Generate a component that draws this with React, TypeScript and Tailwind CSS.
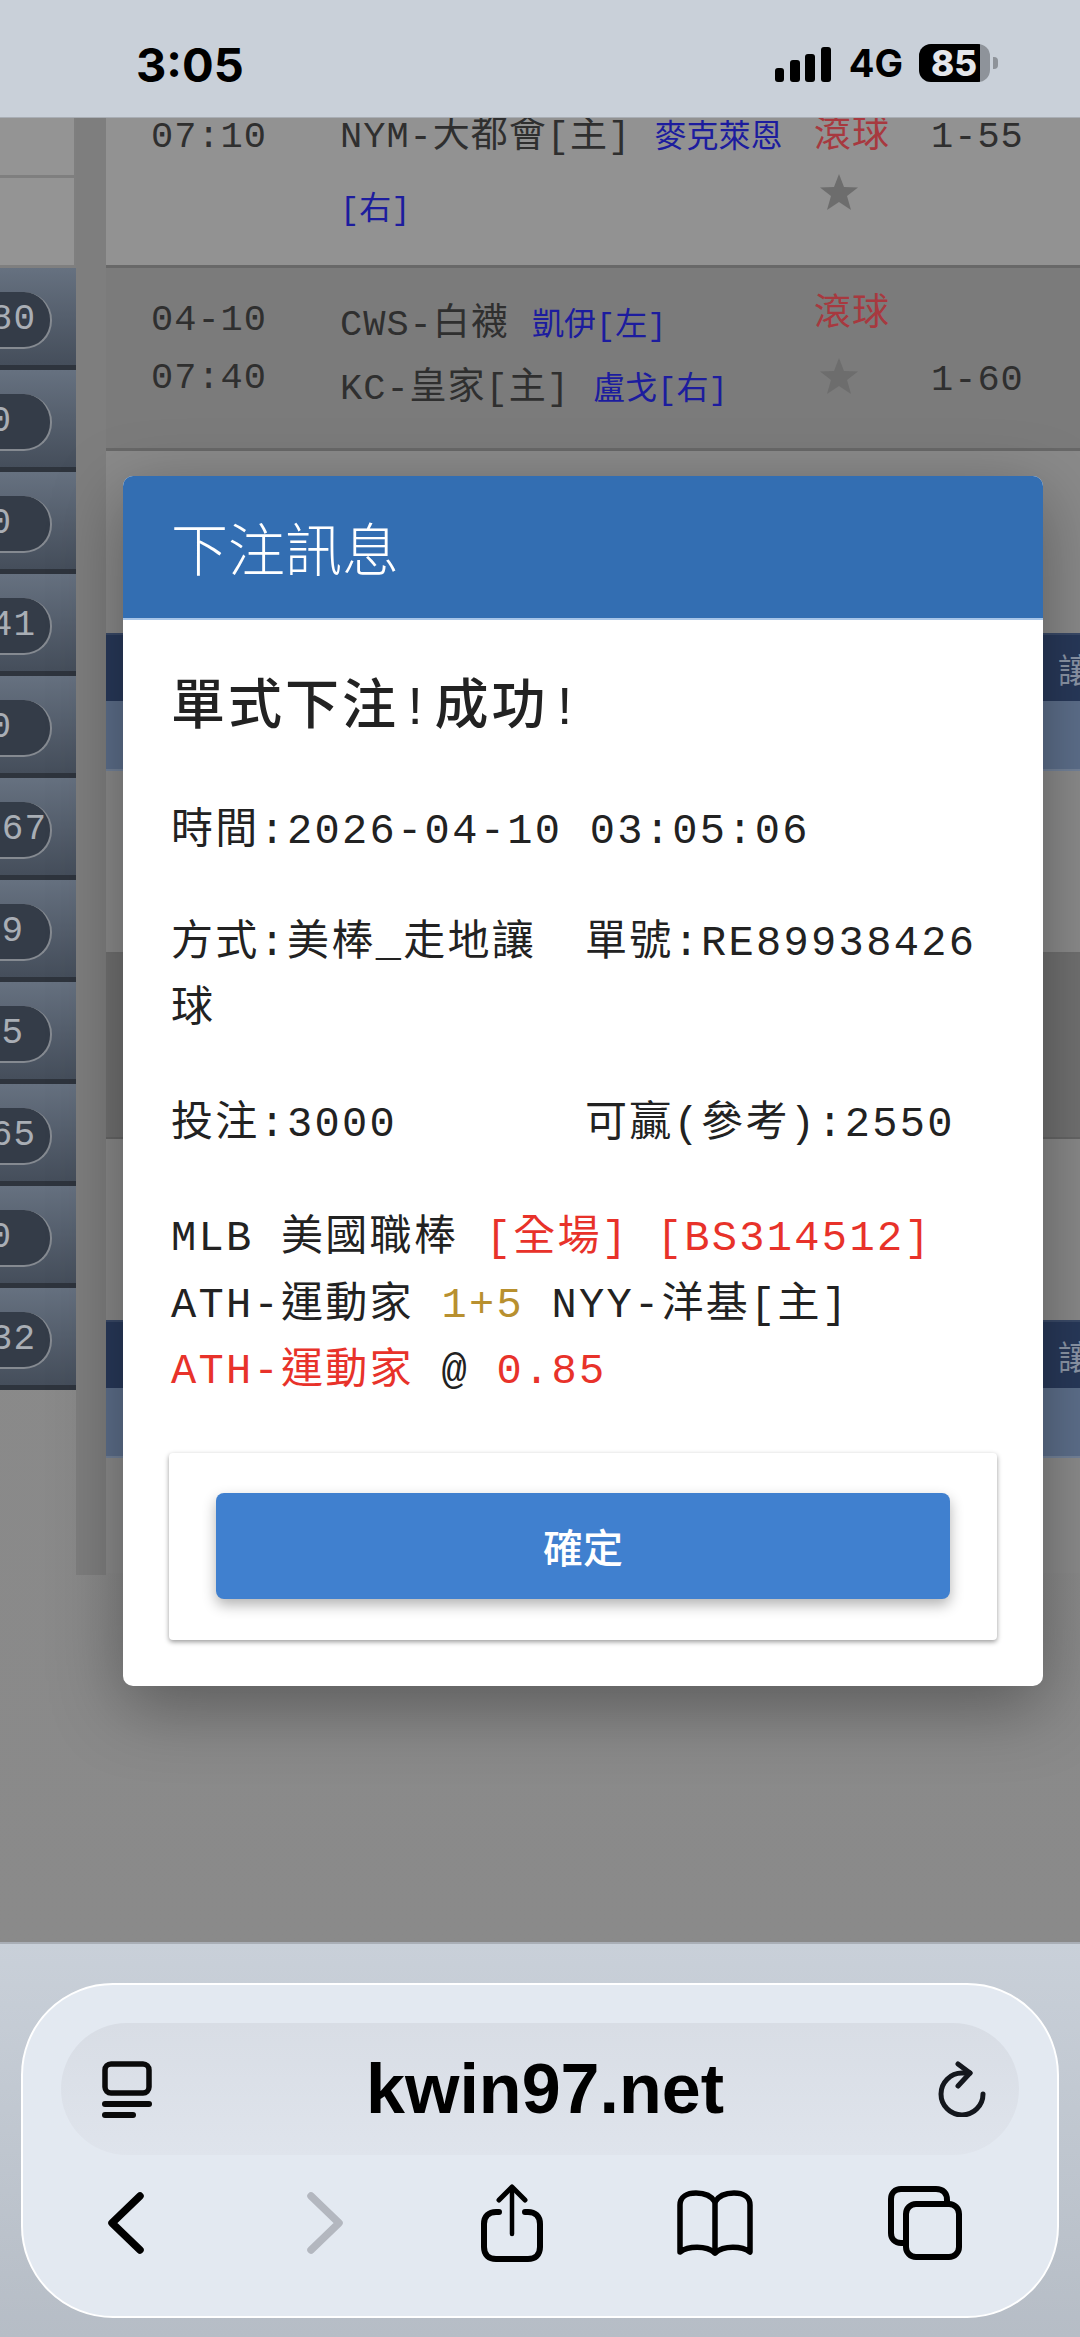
const MONO = "font-['Liberation_Mono','Noto_Sans_CJK_TC',monospace]";

const SIDE_ROWS = [
  { label: "80", pad: "pr-[14px]" },
  { label: "0", pad: "pr-[38px]" },
  { label: "0", pad: "pr-[38px]" },
  { label: "41", pad: "pr-[14px]" },
  { label: "0", pad: "pr-[38px]" },
  { label: "67", pad: "pr-[3px]" },
  { label: "59", pad: "pr-[26px]" },
  { label: "5", pad: "pr-[26px]" },
  { label: "65", pad: "pr-[14px]" },
  { label: "0", pad: "pr-[38px]" },
  { label: "32", pad: "pr-[14px]" },
];

function Star() {
  return (
    <svg width="38" height="36" viewBox="0 0 38 36" className="block">
      <polygon points="19,0 24,13 38,13.5 27,22 31,36 19,28 7,36 11,22 0,13.5 14,13" fill="#6d6d6d" />
    </svg>
  );
}

function SidePanel() {
  return (
    <div className="w-[76px] shrink-0 flex flex-col">
      <div className="h-[60px] bg-[#949494] border-b-[3px] border-r-[2px] border-[#7f7f7f]" />
      <div className="h-[90px] bg-[#949494] border-b-[3px] border-r-[2px] border-[#7f7f7f]" />
      {SIDE_ROWS.map((row, i) => (
        <div key={i} className="h-[102px] pt-[24px] bg-gradient-to-b from-[#667180] to-[#454e5b] border-b-[5px] border-[#2e343d] overflow-hidden">
          <div className={`w-[52px] h-[57px] flex items-center justify-end rounded-r-[28px] bg-[#343c48] border-b-[2px] border-r-[2px] border-[#858a91] overflow-hidden ${row.pad}`}>
            <span className={`${MONO} text-[36px] tracking-[1px] text-[#a9aeb5] leading-none`}>{row.label}</span>
          </div>
        </div>
      ))}
    </div>
  );
}

function GameRow({ bg, time, teams, last, height }: { bg: string; time: string[]; teams: React.ReactNode; last: string; height: string }) {
  return (
    <div className={`${bg} ${height} flex border-b-[3px] border-[#686868] overflow-hidden text-[37px] tracking-[1px] leading-[62px] text-[#2f2f2f] ${MONO}`}>
      <div className="w-[234px] shrink-0 pl-[45px] pt-[23px]">
        {time.map((t) => (
          <div key={t} className="h-[58px] leading-[58px]">{t}</div>
        ))}
      </div>
      {teams}
      <div className="w-[117px] shrink-0 pt-[16px]">
        <div className="text-[#a7393f] h-[62px] leading-[62px]">滾球</div>
        <div className="pl-[6px] pt-[12px]"><Star /></div>
      </div>
      <div className="pt-[81px]">{last}</div>
    </div>
  );
}

function Band({ tail }: { tail?: boolean }) {
  return (
    <div className="flex flex-col">
      <div className="h-[68px] bg-[#28395a] border-t-[2px] border-[#3a4a68] flex items-center justify-end overflow-hidden">
        <span className="text-[34px] text-[#8d97a8] font-['Noto_Sans_CJK_TC',sans-serif] mr-[-12px]">{tail ? "讓" : "讓"}</span>
      </div>
      <div className="h-[70px] bg-[#5d6f8b] border-b-[2px] border-[#74839a]" />
    </div>
  );
}

function GamesPanel() {
  return (
    <div className="flex-1 flex flex-col min-w-0">
      {/* first row is cut by the status bar */}
      <div className="h-[150px] bg-[#929292] flex border-b-[3px] border-[#686868] overflow-hidden text-[37px] tracking-[1px] text-[#2f2f2f] font-['Liberation_Mono','Noto_Sans_CJK_TC',monospace]">
        <div className="w-[234px] shrink-0 pl-[45px] leading-[38px]">07:10</div>
        <div className="w-[474px] shrink-0 mt-[-16px] leading-[70px]">
          NYM-大都會[主] <span className="text-[32px] tracking-[0px] text-[#1c1c9e]">麥克萊恩[右]</span>
        </div>
        <div className="w-[117px] shrink-0 mt-[-16px]">
          <div className="text-[#a7393f] leading-[70px]">滾球</div>
          <div className="pl-[6px] pt-[2px]"><Star /></div>
        </div>
        <div className="leading-[38px]">1-55</div>
      </div>
      <GameRow
        bg="bg-[#7b7b7b]"
        height="h-[183px]"
        time={["04-10", "07:40"]}
        last="1-60"
        teams={
          <div className="w-[474px] shrink-0 pt-[26px]">
            <div>CWS-白襪 <span className="text-[32px] tracking-[0px] text-[#1c1c9e]">凱伊[左]</span></div>
            <div>KC-皇家[主] <span className="text-[32px] tracking-[0px] text-[#1c1c9e]">盧戈[右]</span></div>
          </div>
        }
      />
      <div className="h-[182px] bg-[#8a8a8a]" />
      <Band />
      <div className="h-[183px] bg-[#8b8b8b] border-b-[2px] border-[#707070]" />
      <div className="h-[185px] bg-[#717171] border-b-[2px] border-[#666666]" />
      <div className="h-[181px] bg-[#898989]" />
      <Band tail />
      <div className="h-[115px] bg-[#8b8b8b]" />
    </div>
  );
}

function BetModal() {
  return (
    <div className="absolute left-[123px] top-[358px] w-[920px] rounded-[10px] bg-white shadow-[0_20px_70px_rgba(0,0,0,0.35)] overflow-hidden">
      <div className="h-[144px] bg-[#336eb2] border-b-[2px] border-[#a8c5e8] flex items-center pl-[48px]">
        <span className="text-[57px] text-white font-['Noto_Sans_CJK_TC',sans-serif] font-light">下注訊息</span>
      </div>
      <div className={`px-[48px] pt-[57px] pb-[46px] text-[42px] tracking-[2.3px] leading-[66px] text-[#222222] ${MONO}`}>
        <div className="text-[54px] font-medium tracking-[3px]">單式下注!成功!</div>
        <div className="mt-[56px]">時間:2026-04-10 03:05:06</div>
        <div className="mt-[46px] flex">
          <div className="w-[414px] pr-[20px]">方式:美棒_走地讓球</div>
          <div>單號:RE89938426</div>
        </div>
        <div className="mt-[49px] flex">
          <div className="w-[414px]">投注:3000</div>
          <div>可贏(參考):2550</div>
        </div>
        <div className="mt-[48px] leading-[66.5px]">
          <div>MLB 美國職棒 <span className="text-[#e8322a]">[全場] [BS314512]</span></div>
          <div>ATH-運動家 <span className="text-[#b8902f]">1+5</span> NYY-洋基[主]</div>
          <div><span className="text-[#e8322a]">ATH-運動家</span> @ <span className="text-[#e8322a]">0.85</span></div>
        </div>
        <div className="mt-[47px] ml-[-2px] w-[828px] h-[187px] rounded-[4px] px-[47px] pt-[40px] shadow-[0_2px_5px_rgba(0,0,0,0.4)]">
          <button className="w-full h-[106px] rounded-[8px] bg-[#4080cf] shadow-[0_6px_14px_rgba(0,0,0,0.3)] flex items-center justify-center text-[40px] tracking-normal font-medium text-white font-['Noto_Sans_CJK_TC',sans-serif]">
            確定
          </button>
        </div>
      </div>
    </div>
  );
}

function StatusBar() {
  return (
    <div className="h-[118px] shrink-0 bg-[#c9d0d9] flex items-start pl-[136px] pr-[82px] pt-[36px] border-b border-[#a9aeb5] relative z-10">
      <span className="text-[47px] leading-[58px] font-bold text-black font-['Inter',sans-serif]">3:05</span>
      <div className="ml-auto flex items-center h-[38px] mt-[8px]">
        <div className="flex items-end gap-[5.5px] h-[35px] mt-[2px]">
          <div className="w-[9px] h-[14px] rounded-[3px] bg-black" />
          <div className="w-[10px] h-[22px] rounded-[3px] bg-black" />
          <div className="w-[10px] h-[28px] rounded-[3px] bg-black" />
          <div className="w-[10px] h-[35px] rounded-[3px] bg-black" />
        </div>
        <span className="ml-[18px] text-[38px] font-bold text-black font-['Inter',sans-serif] leading-none">4G</span>
        <div className="ml-[16px] w-[71px] h-[38px] rounded-[12px] bg-[#8e939a] overflow-hidden">
          <div className="w-[61px] h-full bg-black flex items-center justify-end pr-[3px]">
            <span className="text-[35px] font-extrabold text-[#e4e6ea] font-['Inter',sans-serif] leading-none">85</span>
          </div>
        </div>
        <div className="ml-[3px] w-[5px] h-[12px] rounded-r-[4px] bg-[#8e939a]" />
      </div>
    </div>
  );
}

function TabsIcon() {
  return (
    <svg width="50" height="57" viewBox="0 0 50 57" fill="none" stroke="#0a0a0a" strokeWidth="5.5">
      <rect x="3" y="3" width="44" height="29" rx="6" />
      <path d="M3 43h44" strokeLinecap="round" strokeWidth="6" />
      <path d="M3 54h28" strokeLinecap="round" strokeWidth="6" />
    </svg>
  );
}

function ReloadIcon() {
  return (
    <svg width="48" height="56" viewBox="0 0 48 56" fill="none" stroke="#14171d" strokeWidth="5" strokeLinecap="round" strokeLinejoin="round">
      <path d="M45 33a21 21 0 1 1-21-21h8" />
      <path d="M20 3l12 9-12 13" />
    </svg>
  );
}

function BookIcon() {
  return (
    <svg width="78" height="66" viewBox="0 0 78 66" fill="none" stroke="#000" strokeWidth="5.5" strokeLinejoin="round" strokeLinecap="round">
      <path d="M39 12C35 5 28 3 20 3 11 3 4 7 4 15v47c8-6 26-7 35 1 9-8 27-7 35-1V15c0-8-7-12-16-12-8 0-15 2-19 9z" />
      <path d="M39 12v51" />
    </svg>
  );
}

function ShareIcon() {
  return (
    <svg width="62" height="78" viewBox="0 0 62 78" fill="none" stroke="#000" strokeLinecap="round" strokeLinejoin="round">
      <path d="M18 28h-3C8 28 3 32 3 40v23c0 8 5 12 12 12h32c7 0 12-4 12-12V40c0-8-5-12-12-12h-3" strokeWidth="6" />
      <path d="M31 50V4" strokeWidth="4.5" />
      <path d="M18 16L31 3l13 13" strokeWidth="5" />
    </svg>
  );
}

function PagesIcon() {
  return (
    <svg width="74" height="74" viewBox="0 0 74 74" fill="none" stroke="#000" strokeWidth="6" strokeLinejoin="round">
      <path d="M16 57h-3c-6 0-10-4-10-10V13C3 7 7 3 13 3h35c7 0 11 4 11 11v3" />
      <rect x="18" y="18" width="53" height="53" rx="10" />
    </svg>
  );
}

function Chevron({ flip, color }: { flip?: boolean; color: string }) {
  return (
    <svg width="38" height="62" viewBox="0 0 38 62" fill="none" stroke={color} strokeWidth="7.5" strokeLinecap="round" strokeLinejoin="round">
      <path d={flip ? "M5 4l28 27L5 58" : "M33 4L5 31l28 27"} />
    </svg>
  );
}

function BrowserBar() {
  return (
    <div className="h-[395px] shrink-0 bg-gradient-to-b from-[#c9d0d9] to-[#b6bdc6] border-t-[2px] border-[#a9aeb6] pt-[39px] px-[21px] relative z-10">
      <div className="w-[1038px] h-[335px] rounded-[92px] bg-[#e3e9f1] border-[2px] border-white pt-[38px] px-[38px]">
        <div className="h-[132px] rounded-[66px] bg-gradient-to-b from-[#d8dde5] to-[#dfe4ec] flex items-center justify-between pl-[41px] pr-[33px]">
          <TabsIcon />
          <span className="text-[70px] font-bold text-black font-['Liberation_Sans',sans-serif] leading-none">kwin97.net</span>
          <ReloadIcon />
        </div>
        <div className="flex items-center mt-[28px] h-[80px]">
          <div className="w-[48px] ml-[46px] shrink-0"><Chevron color="#000" /></div>
          <div className="w-[38px] ml-[151px] shrink-0"><Chevron flip color="#b3b7bf" /></div>
          <div className="ml-[137px] shrink-0"><ShareIcon /></div>
          <div className="ml-[133px] shrink-0"><BookIcon /></div>
          <div className="ml-[134px] shrink-0"><PagesIcon /></div>
        </div>
      </div>
    </div>
  );
}

export default function App() {
  return (
    <div className="w-[1080px] h-[2337px] flex flex-col overflow-hidden bg-[#888888]">
      <StatusBar />
      <div className="relative flex-1 overflow-hidden flex items-start bg-gradient-to-b from-[#888888] to-[#8a8a8a]">
        <SidePanel />
        <div className="w-[30px] h-[1457px] shrink-0 bg-[#7e7e7e]" />
        <GamesPanel />
        <BetModal />
      </div>
      <BrowserBar />
    </div>
  );
}
